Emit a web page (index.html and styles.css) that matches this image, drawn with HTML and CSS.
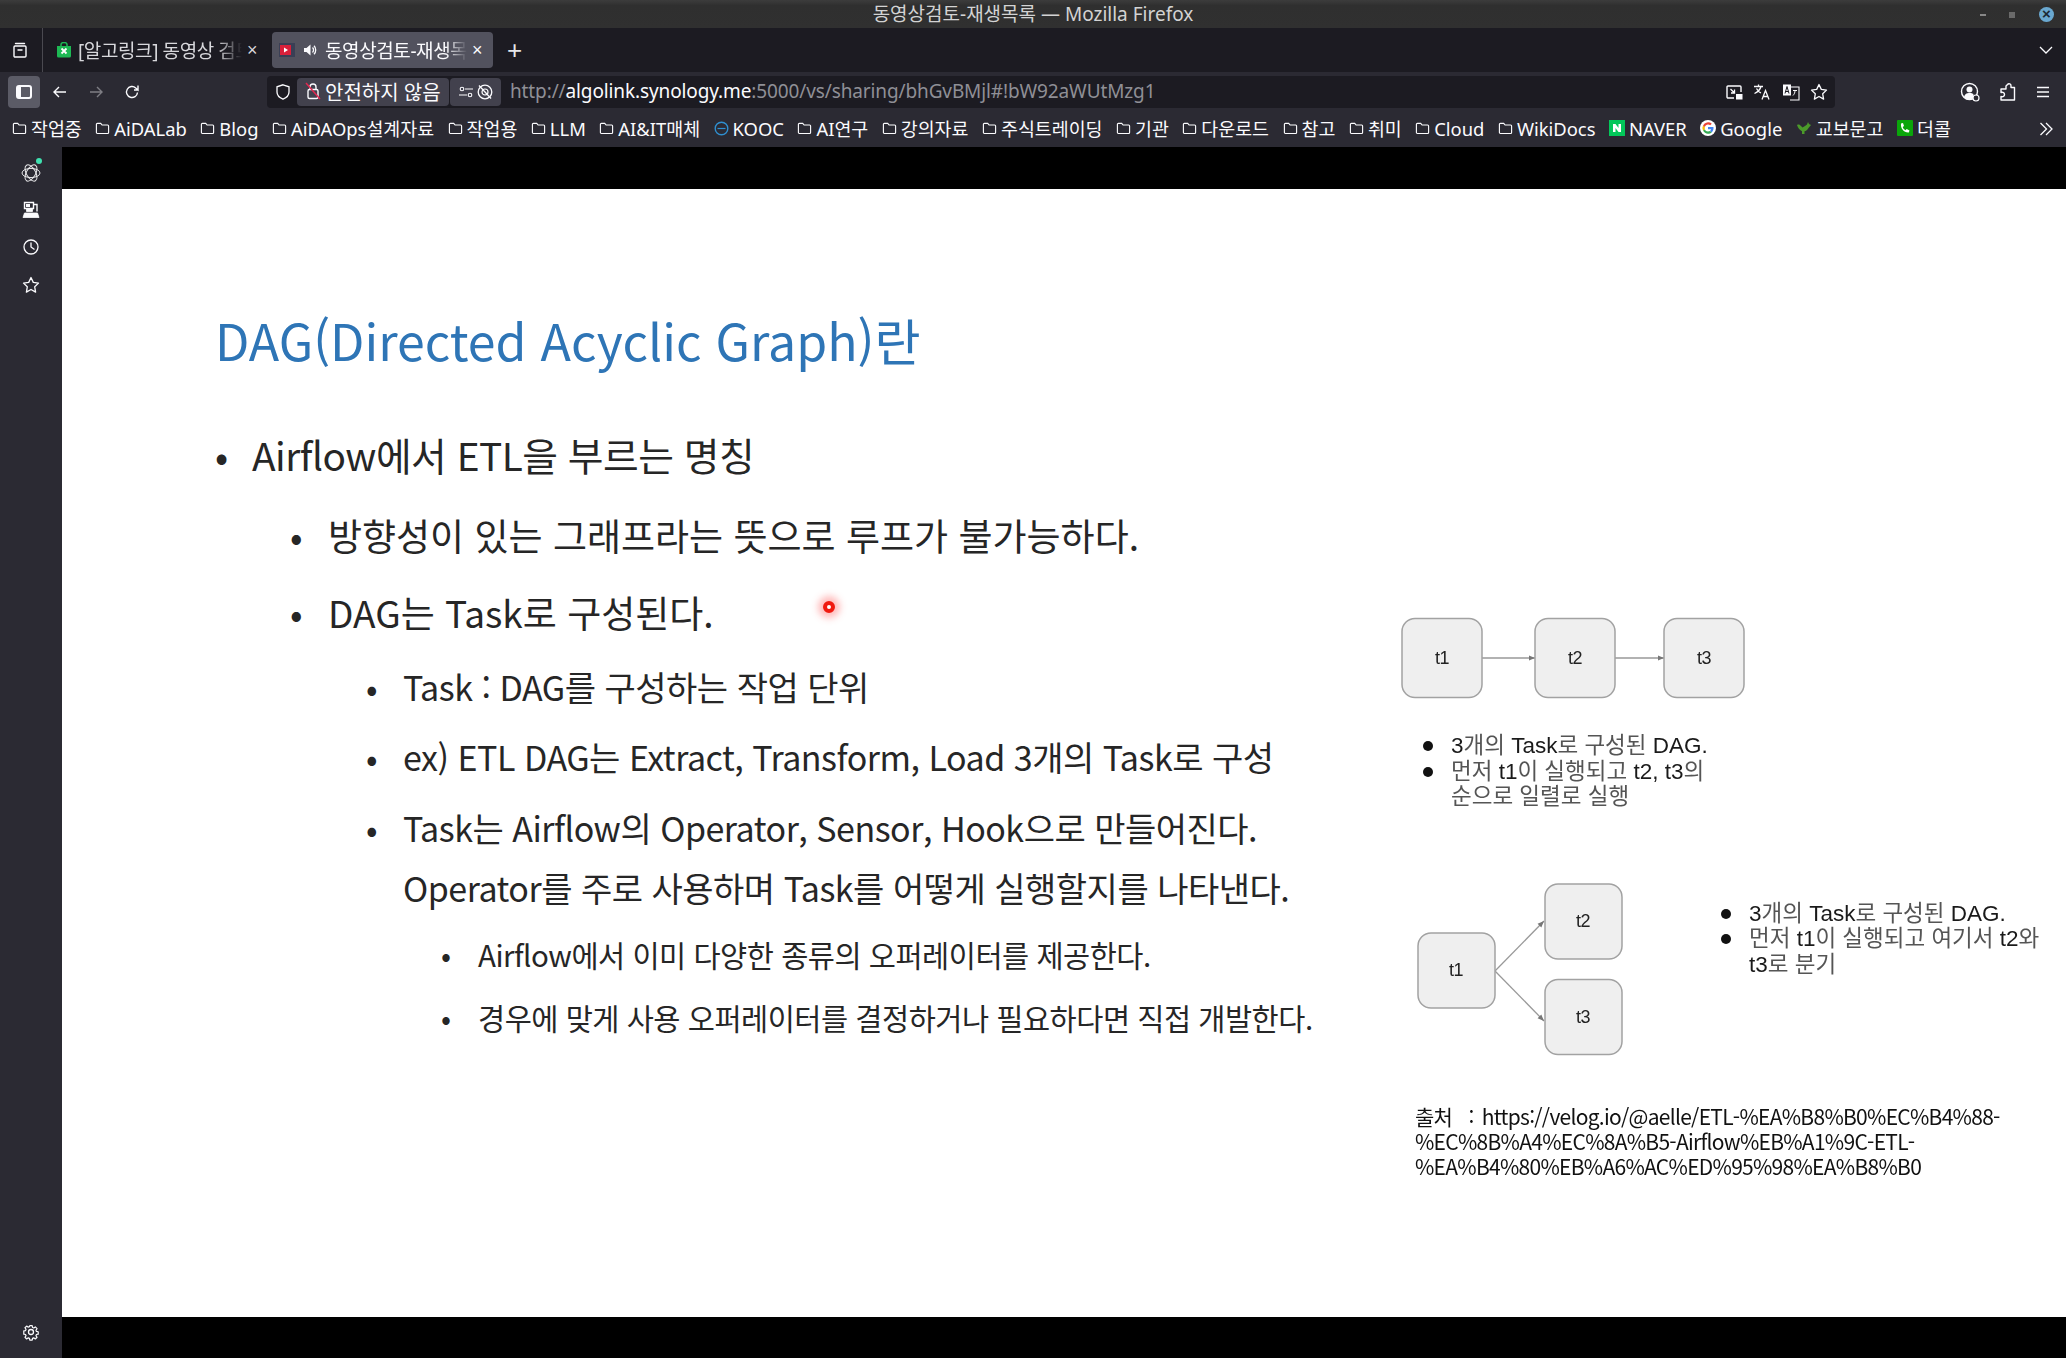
FILE: index.html
```html
<!DOCTYPE html>
<html lang="ko">
<head>
<meta charset="utf-8">
<title>동영상검토-재생목록 — Mozilla Firefox</title>
<link rel="stylesheet" href="styles.css">
</head>
<body>
<svg class="defs" width="0" height="0" aria-hidden="true">
  <symbol id="folder" viewBox="0 0 16 16"><path d="M1.500 3.500a1 1 0 0 1 1-1h3.600l1.500 1.800h5.900a1 1 0 0 1 1 1v7a1 1 0 0 1-1 1H2.500a1 1 0 0 1-1-1z" fill="none" stroke="#fbfbfe" stroke-width="1.200"/></symbol>
</svg>
<header class="titlebar">
  <span class="title-text">동영상검토-재생목록 — Mozilla Firefox</span>
  <div class="win-btns">
    <span class="win-min"></span>
    <span class="win-restore"></span>
    <span class="win-close">×</span>
  </div>
</header>
<div class="tabstrip">
  <div class="tab-view">
    <svg width="18" height="18" viewBox="0 0 18 18"><path d="M4.500 2.500h9M3 6a1 1 0 0 1 1-1h10a1 1 0 0 1 1 1v9a1 1 0 0 1-1 1H4a1 1 0 0 1-1-1zM7 9h4" fill="none" stroke="#fbfbfe" stroke-width="1.400" stroke-linecap="round"/></svg>
  </div>
  <div class="tab tab-first">
    <svg class="fav" width="16" height="16" viewBox="0 0 16 16"><path d="M1 4h14v10a1.500 1.500 0 0 1-1.500 1.500h-11A1.500 1.500 0 0 1 1 14z" fill="#1db954"/><path d="M5 4V2.500a3 2 0 0 1 6 0V4" fill="none" stroke="#1db954" stroke-width="1.500"/><path d="M5.500 6.500l5 5m0-5l-5 5" stroke="#fff" stroke-width="1.800"/></svg>
    <span class="tab-label">[알고링크] 동영상 검토 - 재생목록</span>
    <span class="tab-x">×</span>
  </div>
  <div class="tab tab-active">
    <svg class="fav" width="16" height="16" viewBox="0 0 16 16"><rect y="1" width="16" height="14" fill="#3a3f55"/><rect x="1" y="3" width="11" height="10" fill="#d8203a"/><path d="M5 5.500l4 2.500-4 2.500z" fill="#fff"/></svg>
    <svg class="speaker" width="14" height="14" viewBox="0 0 14 14"><path d="M1 5h2.500L7.500 1.500v11L3.500 9H1z" fill="#fbfbfe"/><path d="M9.500 4.500a3.500 3.500 0 0 1 0 5M11 2.800a6 6 0 0 1 0 8.400" fill="none" stroke="#fbfbfe" stroke-width="1.300"/></svg>
    <span class="tab-label">동영상검토-재생목록</span>
    <span class="tab-x">×</span>
  </div>
  <span class="tab-new">+</span>
  <svg class="tab-all" width="16" height="16" viewBox="0 0 16 16"><path d="M2 5l6 6 6-6" fill="none" stroke="#fbfbfe" stroke-width="1.300"/></svg>
</div>
<nav class="navbar">
  <div class="side-toggle"><svg width="18" height="18" viewBox="0 0 18 18"><rect x="2" y="3" width="14" height="12" rx="2" fill="none" stroke="#fbfbfe" stroke-width="2"/><rect x="2" y="3" width="4" height="12" fill="#fbfbfe"/></svg></div>
  <span class="nav-btn"><svg width="18" height="18" viewBox="0 0 18 18"><path d="M15 9H3m5-5L3 9l5 5" fill="none" stroke="#fbfbfe" stroke-width="1.400"/></svg></span>
  <span class="nav-btn nav-dim"><svg width="18" height="18" viewBox="0 0 18 18"><path d="M3 9h12m-5-5l5 5-5 5" fill="none" stroke="#fbfbfe" stroke-width="1.400"/></svg></span>
  <span class="nav-btn"><svg width="18" height="18" viewBox="0 0 18 18"><path d="M14.500 9.500a5.500 5.500 0 1 1-1.800-4.600L15 7V2.500M15 7h-4" fill="none" stroke="#fbfbfe" stroke-width="1.400"/></svg></span>
  <div class="urlbar">
    <svg class="shield" width="18" height="18" viewBox="0 0 18 18"><path d="M9 1.800l6 2v5.200c0 3.500-2.800 5.900-6 7.200-3.200-1.300-6-3.700-6-7.200V3.800z" fill="none" stroke="#fbfbfe" stroke-width="1.300"/></svg>
    <div class="pill pill-sec">
      <svg width="18" height="20" viewBox="0 0 18 20"><rect x="4" y="8.500" width="10" height="9" rx="1.500" fill="none" stroke="#fbfbfe" stroke-width="1.400"/><path d="M6 8.500V6a3 3 0 0 1 6 0v2.500" fill="none" stroke="#fbfbfe" stroke-width="1.400"/><path d="M2 2l14 16" stroke="#e22850" stroke-width="1.500"/></svg>
      <span>안전하지 않음</span>
    </div>
    <div class="pill pill-perm">
      <svg width="16" height="12" viewBox="0 0 16 12"><path d="M7 3h8M1 9h8" stroke="#fbfbfe" stroke-width="1.200"/><circle cx="4" cy="3" r="1.800" fill="none" stroke="#fbfbfe" stroke-width="1.100"/><circle cx="12" cy="9" r="1.800" fill="none" stroke="#fbfbfe" stroke-width="1.100"/></svg>
      <svg width="18" height="18" viewBox="0 0 18 18"><circle cx="9" cy="9" r="6.800" fill="none" stroke="#fbfbfe" stroke-width="1.300"/><circle cx="9" cy="9" r="3" fill="none" stroke="#fbfbfe" stroke-width="1.200"/><path d="M3 2.500l12 13" stroke="#fbfbfe" stroke-width="1.300"/></svg>
    </div>
    <div class="url"><span class="url-dim">http://</span>algolink.synology.me<span class="url-dim">:5000/vs/sharing/bhGvBMjl#!bW92aWUtMzg1</span></div>
    <div class="url-actions">
      <svg width="18" height="18" viewBox="0 0 18 18"><path d="M9 15H3a1 1 0 0 1-1-1V4a1 1 0 0 1 1-1h12a1 1 0 0 1 1 1v5" fill="none" stroke="#fbfbfe" stroke-width="1.400"/><path d="M5.500 6l4 4M9.500 6.500V10H6" fill="none" stroke="#fbfbfe" stroke-width="1.300"/><rect x="11" y="11" width="6.500" height="5.500" fill="#fbfbfe"/></svg>
      <svg width="18" height="18" viewBox="0 0 18 18"><path d="M1 3.500h9M5.500 1.500v2M8 3.500c-.8 3-3 5.500-6.500 7M3.500 5.500c1 2 2.500 3.500 4.500 4.500" fill="none" stroke="#fbfbfe" stroke-width="1.300"/><path d="M9 16.500l3.500-9 3.500 9M10.200 13.500h4.600" fill="none" stroke="#fbfbfe" stroke-width="1.300"/></svg>
      <svg width="18" height="18" viewBox="0 0 18 18"><rect x="1" y="1.500" width="8" height="11" fill="#fbfbfe"/><path d="M9 4h8v13H8" fill="none" stroke="#fbfbfe" stroke-width="1.100"/><path d="M3 10.500l2-7 2 7M3.800 8.500h2.400" fill="none" stroke="#1c1b22" stroke-width="1"/><path d="M11 7.500h4M13 7.500c0 2-.6 3.500-2 5" fill="none" stroke="#fbfbfe" stroke-width="1"/></svg>
      <svg width="18" height="18" viewBox="0 0 18 18"><path d="M9 1.500l2.300 4.900 5.200.7-3.800 3.700.9 5.300L9 13.500l-4.600 2.600.9-5.300L1.500 7.100l5.200-.7z" fill="none" stroke="#fbfbfe" stroke-width="1.300" stroke-linejoin="round"/></svg>
    </div>
  </div>
  <div class="nav-right">
    <svg width="20" height="20" viewBox="0 0 20 20"><circle cx="9.500" cy="9.500" r="8" fill="none" stroke="#fbfbfe" stroke-width="1.400"/><circle cx="9.500" cy="7.500" r="3" fill="#fbfbfe"/><path d="M4 15c1-3.500 3-4 5.500-4s3.500.5 4 1.500V16l-3 1.500H7z" fill="#fbfbfe"/><circle cx="16" cy="16" r="3" fill="#2b2a33" stroke="#fbfbfe" stroke-width="1.200"/></svg>
    <svg width="18" height="20" viewBox="0 0 18 20"><path d="M9.500 2.500a2 2 0 0 1 3.500 1.500v1.500h3.500v12.500H3V14.500c2 .7 3.500-.2 3.500-2s-1.500-2.700-3.500-2V7h5V4z" fill="none" stroke="#fbfbfe" stroke-width="1.400" stroke-linejoin="round"/></svg>
    <svg width="18" height="18" viewBox="0 0 18 18"><path d="M3 4.500h12M3 9h12M3 13.500h12" stroke="#fbfbfe" stroke-width="1.500"/></svg>
  </div>
</nav>
<div class="bookmarks">
  <a class="bm"><svg width="15" height="15"><use href="#folder"/></svg>작업중</a>
  <a class="bm"><svg width="15" height="15"><use href="#folder"/></svg>AiDALab</a>
  <a class="bm"><svg width="15" height="15"><use href="#folder"/></svg>Blog</a>
  <a class="bm"><svg width="15" height="15"><use href="#folder"/></svg>AiDAOps설계자료</a>
  <a class="bm"><svg width="15" height="15"><use href="#folder"/></svg>작업용</a>
  <a class="bm"><svg width="15" height="15"><use href="#folder"/></svg>LLM</a>
  <a class="bm"><svg width="15" height="15"><use href="#folder"/></svg>AI&amp;IT매체</a>
  <a class="bm"><svg width="15" height="15" viewBox="0 0 15 15"><circle cx="7.500" cy="7.500" r="6.300" fill="none" stroke="#2f8fd0" stroke-width="1.400"/><path d="M3.500 7.500h8" stroke="#2f8fd0" stroke-width="1.200"/></svg>KOOC</a>
  <a class="bm"><svg width="15" height="15"><use href="#folder"/></svg>AI연구</a>
  <a class="bm"><svg width="15" height="15"><use href="#folder"/></svg>강의자료</a>
  <a class="bm"><svg width="15" height="15"><use href="#folder"/></svg>주식트레이딩</a>
  <a class="bm"><svg width="15" height="15"><use href="#folder"/></svg>기관</a>
  <a class="bm"><svg width="15" height="15"><use href="#folder"/></svg>다운로드</a>
  <a class="bm"><svg width="15" height="15"><use href="#folder"/></svg>참고</a>
  <a class="bm"><svg width="15" height="15"><use href="#folder"/></svg>취미</a>
  <a class="bm"><svg width="15" height="15"><use href="#folder"/></svg>Cloud</a>
  <a class="bm"><svg width="15" height="15"><use href="#folder"/></svg>WikiDocs</a>
  <a class="bm"><svg width="16" height="16" viewBox="0 0 16 16"><rect width="16" height="16" fill="#03c75a"/><path d="M4 12V4h2.500l3 4V4H12v8H9.500l-3-4v4z" fill="#fff"/></svg>NAVER</a>
  <a class="bm"><svg width="16" height="16" viewBox="0 0 16 16"><circle cx="8" cy="8" r="8" fill="#fff"/><path d="M13.500 8.200c0-.4 0-.8-.1-1.200H8v2.300h3.100a2.700 2.700 0 0 1-1.200 1.700l1.800 1.400c1.100-1 1.800-2.500 1.800-4.200z" fill="#4285f4"/><path d="M8 13.700c1.500 0 2.800-.5 3.700-1.300l-1.800-1.400c-.5.300-1.100.5-1.900.5-1.500 0-2.700-1-3.100-2.300L3 10.600a5.700 5.700 0 0 0 5 3.100z" fill="#34a853"/><path d="M4.900 9.200a3.400 3.400 0 0 1 0-2.200L3 5.500a5.700 5.700 0 0 0 0 5.100z" fill="#fbbc05"/><path d="M8 4.500c.8 0 1.600.3 2.200.8l1.600-1.600A5.700 5.700 0 0 0 3 5.500l1.900 1.500C5.300 5.600 6.500 4.500 8 4.500z" fill="#ea4335"/></svg>Google</a>
  <a class="bm"><svg width="16" height="16" viewBox="0 0 16 16"><path d="M1 5c2-1 3 0 4 1l1.500 1.500L9 6l2-1.500 1-2.500 1 2 2 1-2.500 3c-1 2-2.500 3-4 3.200V14H6v-2.800C4 10.500 2 8 1 5z" fill="#4b9a2a"/></svg>교보문고</a>
  <a class="bm"><svg width="16" height="16" viewBox="0 0 16 16"><rect width="16" height="16" rx="1" fill="#0aa60a"/><path d="M4 3.500l2-.5 1 3-1.300 1c.5 1.500 1.300 2.500 2.800 3.200l1.200-1.200 2.800 1.500-.7 2c-4.500.5-8.500-4-7.800-9z" fill="#fff"/></svg>더콜</a>
  <svg class="bm-more" width="16" height="16" viewBox="0 0 16 16"><path d="M2.500 2l6 6-6 6M8 2l6 6-6 6" fill="none" stroke="#fbfbfe" stroke-width="1.300"/></svg>
</div>
<div class="main">
  <aside class="sidebar">
    <div class="side-icon side-ai">
      <svg width="20" height="20" viewBox="0 0 20 20" fill="none" stroke="#e8e8ea" stroke-width="1"><ellipse cx="10" cy="10" rx="9" ry="4.600"/><ellipse cx="10" cy="10" rx="9" ry="4.600" transform="rotate(60 10 10)"/><ellipse cx="10" cy="10" rx="9" ry="4.600" transform="rotate(120 10 10)"/></svg>
    </div>
    <div class="side-icon"><svg width="18" height="18" viewBox="0 0 18 18"><path d="M2.500 1.500h9v6h-9zM11.500 3.500H15v7" fill="none" stroke="#fbfbfe" stroke-width="1.400"/><rect x="4" y="3" width="4" height="3" fill="#fbfbfe"/><path d="M4.500 7.500v3h6v-3M1 16.500l1.500-4.500h13l1.500 4.500z" fill="#fbfbfe" stroke="#fbfbfe" stroke-width=".8"/></svg></div>
    <div class="side-icon"><svg width="18" height="18" viewBox="0 0 18 18"><circle cx="9" cy="9" r="7" fill="none" stroke="#fbfbfe" stroke-width="1.300"/><path d="M9 4.500V9l3.500 2.500" fill="none" stroke="#fbfbfe" stroke-width="1.300"/></svg></div>
    <div class="side-icon"><svg width="18" height="18" viewBox="0 0 18 18"><path d="M9 1.500l2.300 4.900 5.200.7-3.800 3.700.9 5.300L9 13.500l-4.600 2.600.9-5.300L1.500 7.100l5.200-.7z" fill="none" stroke="#fbfbfe" stroke-width="1.300" stroke-linejoin="round"/></svg></div>
    <div class="side-icon side-gear"><svg width="18" height="18" viewBox="0 0 18 18"><circle cx="9" cy="9" r="2.500" fill="none" stroke="#fbfbfe" stroke-width="1.300"/><path d="M7.600 1.500h2.800l.4 2.200 1.400.6 1.900-1.300 2 2-1.300 1.900.6 1.400 2.100.4v2.800l-2.100.4-.6 1.400 1.300 1.900-2 2-1.900-1.300-1.400.6-.4 2h-2.800l-.4-2-1.400-.6-1.900 1.300-2-2 1.300-1.900-.6-1.400-2.100-.4V7.700l2.100-.4.6-1.400-1.300-1.900 2-2 1.900 1.300 1.400-.6z" transform="translate(1.350 1.350) scale(.85)" fill="none" stroke="#fbfbfe" stroke-width="1.400" stroke-linejoin="round"/></svg></div>
  </aside>
  <section class="video">
    <div class="slide">
      <div class="slide-left">
        <h1 class="slide-title">DAG(Directed Acyclic Graph)란</h1>
        <ul class="points">
          <li class="l1">Airflow에서 ETL을 부르는 명칭</li>
          <li class="l2">방향성이 있는 그래프라는 뜻으로 루프가 불가능하다.</li>
          <li class="l2">DAG는 Task로 구성된다.</li>
          <li class="l3">Task : DAG를 구성하는 작업 단위</li>
          <li class="l3">ex) ETL DAG는 Extract, Transform, Load 3개의 Task로 구성</li>
          <li class="l3 l3-wide"><span>Task는 Airflow의 Operator, Sensor, Hook으로 만들어진다.<br>Operator를 주로 사용하며 Task를 어떻게 실행할지를 나타낸다.</span></li>
          <li class="l4">Airflow에서 이미 다양한 종류의 오퍼레이터를 제공한다.</li>
          <li class="l4">경우에 맞게 사용 오퍼레이터를 결정하거나 필요하다면 직접 개발한다.</li>
        </ul>
      </div>
      <div class="slide-right">
        <svg class="dag dag-line" width="346" height="84" viewBox="0 0 346 84">
          <defs><marker id="ah" markerWidth="6" markerHeight="6" refX="5" refY="3" orient="auto"><path d="M0 1l5 2-5 2z" fill="#777"/></marker></defs>
          <path d="M81 41h53" class="edge" marker-end="url(#ah)"/>
          <path d="M214 41h49" class="edge" marker-end="url(#ah)"/>
          <rect x="1" y="1.500" width="80" height="79" rx="13" class="node"/>
          <rect x="134" y="1.500" width="80" height="79" rx="13" class="node"/>
          <rect x="263" y="1.500" width="80" height="79" rx="13" class="node"/>
          <text x="41" y="47" class="node-t">t1</text>
          <text x="174" y="47" class="node-t">t2</text>
          <text x="303" y="47" class="node-t">t3</text>
        </svg>
        <ul class="notes notes-a">
          <li><span><b>3</b>개의 <b>Task</b>로 구성된 <b>DAG.</b></span></li>
          <li><span>먼저 <b>t1</b>이 실행되고 <b>t2, t3</b>의<br>순으로 일렬로 실행</span></li>
        </ul>
        <div class="dag-row">
          <svg class="dag" width="208" height="174" viewBox="0 0 208 174">
            <path d="M79 88l49-50" class="edge" marker-end="url(#ah)"/>
            <path d="M79 88l49 50" class="edge" marker-end="url(#ah)"/>
            <rect x="2" y="50" width="77" height="75" rx="13" class="node"/>
            <rect x="129" y="1" width="77" height="75" rx="13" class="node"/>
            <rect x="129" y="96.500" width="77" height="75" rx="13" class="node"/>
            <text x="40" y="93" class="node-t">t1</text>
            <text x="167" y="44" class="node-t">t2</text>
            <text x="167" y="140" class="node-t">t3</text>
          </svg>
          <ul class="notes notes-b">
            <li><span><b>3</b>개의 <b>Task</b>로 구성된 <b>DAG.</b></span></li>
            <li><span>먼저 <b>t1</b>이 실행되고 여기서 <b>t2</b>와<br><b>t3</b>로 분기</span></li>
          </ul>
        </div>
        <p class="source">출처&nbsp;&nbsp;: https://velog.io/@aelle/ETL-%EA%B8%B0%EC%B4%88-<br>%EC%8B%A4%EC%8A%B5-Airflow%EB%A1%9C-ETL-<br>%EA%B4%80%EB%A6%AC%ED%95%98%EA%B8%B0</p>
      </div>
      <span class="pointer"></span>
    </div>
  </section>
</div>
</body>
</html>
```

FILE: styles.css
```css
* { box-sizing: border-box; }
html, body { margin: 0; padding: 0; }
body {
  width: 2066px;
  height: 1358px;
  overflow: hidden;
  background: #000;
  color: #fbfbfe;
  font-family: "Noto Sans", "Noto Sans CJK KR", sans-serif;
  display: flex;
  flex-direction: column;
}
.defs { position: absolute; }
svg { display: block; flex: none; }

.titlebar {
  height: 28px;
  background: linear-gradient(#3c3c3c, #2f2f2f 20%, #303030);
  display: flex;
  align-items: center;
  justify-content: center;
  position: relative;
  padding-bottom: 2px;
}
.title-text { font-size: 19px; color: #d3d3d3; }
.win-btns {
  position: absolute;
  right: 12px;
  top: 7px;
  display: flex;
  align-items: center;
  gap: 18px;
}
.win-min { width: 6px; height: 2px; background: #888; margin-right: 5px; }
.win-restore { width: 6px; height: 6px; background: #6a6a6a; margin-right: 6px; }
.win-close {
  width: 15px;
  height: 15px;
  border-radius: 50%;
  background: #6aa8d0;
  color: #1c2a33;
  font: 700 15px/14px "Liberation Sans", sans-serif;
  text-align: center;
}

.tabstrip {
  height: 44px;
  background: #1c1b22;
  display: flex;
  align-items: center;
}
.tab-view {
  width: 43px;
  height: 44px;
  border-right: 1px solid #4a4950;
  padding-left: 11px;
  display: flex;
  align-items: center;
}
.tab {
  height: 36px;
  width: 221px;
  padding: 0 10px 0 7px;
  border-radius: 4px;
  display: flex;
  align-items: center;
  font-size: 19px;
  letter-spacing: -.4px;
  color: #d8d8dc;
}
.tab-first { width: 223px; margin-left: 6px; padding-right: 14px; }
.tab-active { background: #52525e; color: #fbfbfe; }
.tab-label {
  flex: 1;
  min-width: 0;
  margin-left: 6px;
  white-space: nowrap;
  overflow: hidden;
  -webkit-mask-image: linear-gradient(90deg, #000 85%, transparent);
  mask-image: linear-gradient(90deg, #000 85%, transparent);
}
.speaker { margin-left: 8px; }
.tab-active .tab-label { margin-left: 8px; }
.tab-x { font: 18px/1 "Liberation Sans", sans-serif; margin-left: 4px; width: 12px; text-align: center; }
.tab-new { font: 300 26px/1 "Liberation Sans", sans-serif; margin-left: 14px; color: #e6e6ea; }
.tab-all { margin-left: auto; margin-right: 12px; }

.navbar {
  height: 36px;
  padding: 4px 0 0 8px;
  background: #2b2a33;
  display: flex;
  align-items: stretch;
}
.side-toggle {
  width: 32px;
  background: #5b5b66;
  border-radius: 4px;
  display: flex;
  align-items: center;
  justify-content: center;
  margin-right: 2px;
}
.nav-btn { width: 36px; display: flex; align-items: center; justify-content: center; }
.nav-dim svg { opacity: .4; }
.urlbar {
  width: 1568px;
  margin-left: 117px;
  background: #1c1b22;
  border-radius: 4px;
  display: flex;
  align-items: center;
  padding-left: 7px;
}
.shield { margin-right: 5px; }
.pill {
  height: 28px;
  background: #42414d;
  display: flex;
  align-items: center;
  border-radius: 4px;
}
.pill-sec { width: 152px; padding-left: 7px; gap: 3px; font-size: 20px; white-space: nowrap; padding-bottom: 2px; overflow: hidden; }
.pill-perm { width: 51px; margin-left: 1px; padding-left: 8px; gap: 2px; }
.url { margin-left: 9px; font-size: 19px; letter-spacing: -.12px; white-space: nowrap; color: #fbfbfe; padding-bottom: 3px; }
.url-dim { color: #8f8f96; }
.url-actions { margin-left: auto; margin-right: 7px; display: flex; align-items: center; gap: 10.500px; }
.nav-right { flex: 1; display: flex; align-items: center; gap: 18px; padding-left: 125px; }

.bookmarks {
  height: 39px;
  background: #2b2a33;
  padding: 1px 0 0 12px;
  display: flex;
  align-items: center;
  gap: 13.500px;
  font-size: 18.400px;
  white-space: nowrap;
  color: #fbfbfe;
}
.bm { display: flex; align-items: center; gap: 4px; }
.bm-more { position: absolute; left: 2038px; top: 121px; }

.main { flex: 1; display: flex; min-height: 0; }
.sidebar {
  width: 62px;
  background: #2b2a33;
  display: flex;
  flex-direction: column;
  align-items: center;
  padding-top: 16px;
  gap: 17.200px;
}
.side-icon { width: 20px; height: 20px; display: flex; align-items: center; justify-content: center; position: relative; }
.side-ai::after {
  content: "";
  position: absolute;
  left: 15px;
  top: -5px;
  width: 6px;
  height: 6px;
  border-radius: 50%;
  background: #3fe1b0;
}
.side-gear { margin-top: auto; margin-bottom: 16px; }

.video { flex: 1; padding: 42px 0 41px; background: #000; min-width: 0; }
.slide {
  height: 100%;
  background: #fff;
  display: flex;
  position: relative;
  font-family: "Noto Sans CJK KR", "Noto Sans", sans-serif;
  color: #262626;
}
.slide-left { width: 1339px; padding: 115px 0 0 153px; flex: none; }
.slide-title {
  margin: 0;
  font-size: 50px;
  line-height: 70px;
  font-weight: 400;
  color: #2e75b6;
  white-space: nowrap;
}
.points { list-style: none; margin: 50px 0 0; padding: 0; white-space: nowrap; }
.points li { display: flex; }
.points li::before { content: "•"; flex: none; }
.l1 { font-size: 38.800px; line-height: 60px; letter-spacing: -.5px; }
.l1::before { width: 37px; }
.l2 { font-size: 37px; line-height: 50px; margin: 26px 0 0 75px; }
.l2::before { width: 38px; }
.l2 + .l2 { margin-top: 27px; }
.l3 { font-size: 34px; line-height: 46px; margin: 27px 0 0 151px; letter-spacing: -.5px; }
.l3::before { width: 37px; }
.l3 + .l3 { margin-top: 24px; }
.l3-wide { line-height: 60px; }
.points .l3-wide { margin-top: 18px; }
.l4 { font-size: 29.500px; line-height: 44px; margin: 19px 0 0 226px; letter-spacing: -.5px; }
.l4::before { width: 37px; }
.l3-wide + .l4 { margin-top: 14px; }

.slide-right { flex: 1; min-width: 0; padding-top: 428px; }
.dag { filter: blur(.35px); }
.edge { stroke: #999; stroke-width: 1.300px; fill: none; }
.node { fill: #efefef; stroke: #a2a2a2; stroke-width: 1.500px; }
.node-t {
  font-family: "Liberation Sans", sans-serif;
  font-size: 18px;
  letter-spacing: -.5px;
  text-anchor: middle;
  fill: #222;
}
.notes {
  margin: 0;
  padding: 0;
  list-style: none;
  font-size: 22.500px;
  line-height: 25.500px;
  color: #555;
  white-space: nowrap;
  font-family: "Liberation Sans", "Noto Sans CJK KR", sans-serif;
  filter: blur(.3px);
}
.notes b { font-weight: 400; color: #1a1a1a; }
.notes li { display: flex; }
.notes li::before {
  content: "";
  flex: none;
  width: 10px;
  height: 10px;
  margin: 8px 18px 0 0;
  border-radius: 50%;
  background: #111;
}
.notes-a { margin: 32px 0 0 22px; }
.dag-row { display: flex; margin: 73px 0 0 15px; }
.notes-b { margin: 18px 0 0 97px; }
.source {
  margin: 47px 0 0 14px;
  font-size: 21px;
  line-height: 25px;
  color: #111;
  white-space: nowrap;
  letter-spacing: -.72px;
  word-spacing: 3px;
  filter: blur(.3px);
}
.pointer {
  position: absolute;
  left: 761px;
  top: 412px;
  width: 12px;
  height: 12px;
  border-radius: 50%;
  border: 4px solid #f01a10;
  background: #fff;
  box-shadow: 0 0 7px 5px rgba(255, 60, 60, .35);
}
```
